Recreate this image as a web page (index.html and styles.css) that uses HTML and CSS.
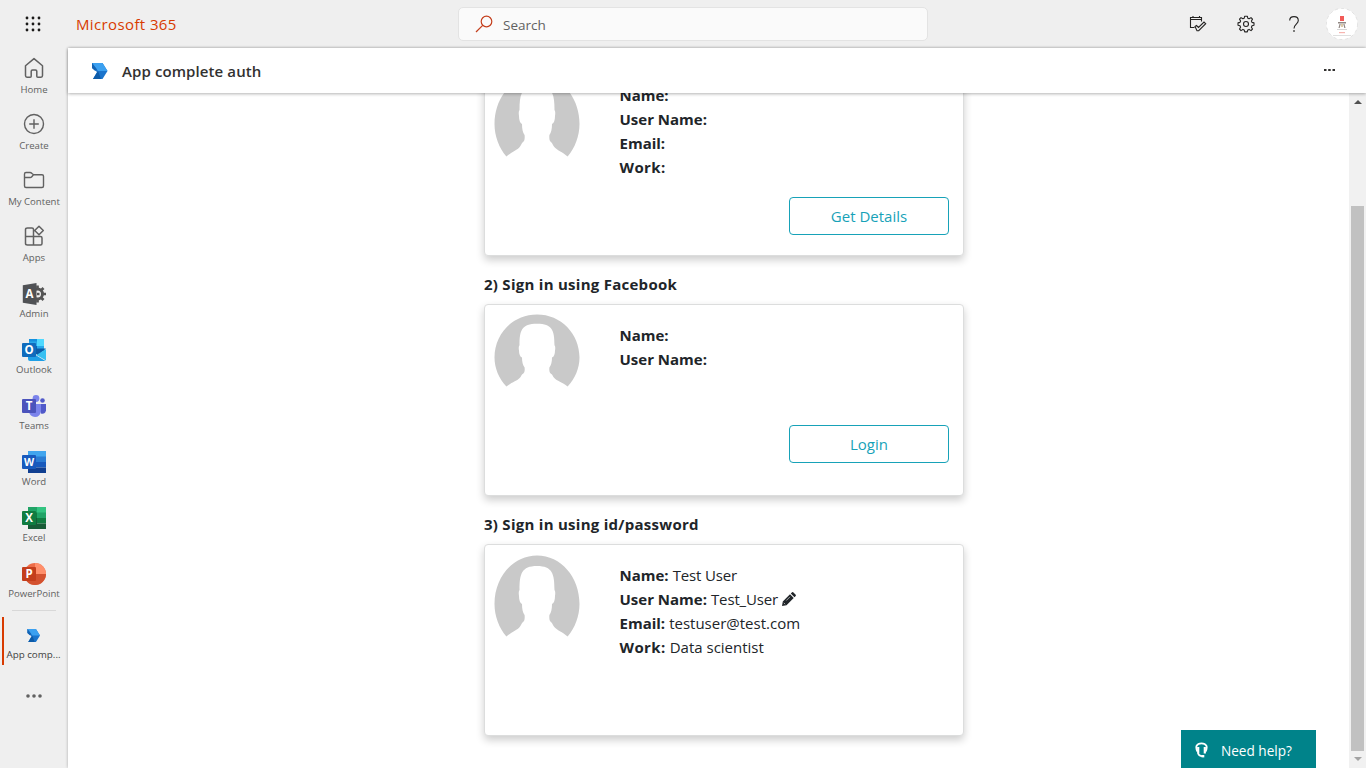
FILE: index.html
```html
<!DOCTYPE html>
<html lang="en">
<head>
<meta charset="utf-8">
<title>Microsoft 365</title>
<link rel="stylesheet" href="styles.css">
</head>
<body>
<svg class="defs" width="0" height="0">
  <symbol id="brand" viewBox="0 0 16 16">
    <path fill="#1b74cc" d="M.5 0H11l5 8-5 8H1.500L5.500 9 .5 5z"/>
    <path fill="#3ba0f0" d="M.5 0H11l5 8H6.500z"/>
    <path fill="#1263b4" d="M.5 0l5 6.500-2 1.300-3-2.800z"/>
    <path fill="#0d5ba8" d="M1.500 16l5-8 3 8z"/>
  </symbol>
  <symbol id="avatar" viewBox="0 0 86 82" preserveAspectRatio="none">
    <path fill="#c9c9c9" d="M12.400 81.500C5 73 .5 61 .5 49 .5 22 19 .5 43 .5S85.500 22 85.500 49c0 12-4.500 24-11.900 32.500-5-4.500-11-6.500-13.300-9.500-1.500-2-1.500-3-2.600-4.300-2-1.500-2.700-3-2.300-7.700 1.800-2.500 2.600-6 2.600-11 2-1 3-4 3-8 .5-3 .3-5-.5-6 0-16-2-24-17.500-24S25.500 19 25.500 35c-.8 1-1 3-.5 6 0 4 1 7 3 8 0 5 .8 8.500 2.600 11 .4 4.700-.3 6.200-2.300 7.700-1.100 1.300-1.100 2.300-2.600 4.300-2.300 3-8.300 5-13.300 9.500z"/>
  </symbol>
</svg>

<header class="topbar">
  <svg class="waffle" width="16" height="16" viewBox="0 0 16 16" fill="#1b1a19"><circle cx="2" cy="2" r="1.400"/><circle cx="8" cy="2" r="1.400"/><circle cx="14" cy="2" r="1.400"/><circle cx="2" cy="8" r="1.400"/><circle cx="8" cy="8" r="1.400"/><circle cx="14" cy="8" r="1.400"/><circle cx="2" cy="14" r="1.400"/><circle cx="8" cy="14" r="1.400"/><circle cx="14" cy="14" r="1.400"/></svg>
  <span class="product">Microsoft 365</span>
  <div class="search">
    <svg width="18" height="18" viewBox="0 0 18 18" fill="none" stroke="#c43e1c" stroke-width="1.200"><circle cx="11.500" cy="6.500" r="5.300"/><path d="M7.700 10.300L1 17"/></svg>
    <span class="search-text">Search</span>
  </div>
  <div class="tools">
    <svg width="18" height="18" viewBox="0 0 18 18" fill="none" stroke="#252423" stroke-width="1.100"><path d="M5.500 12.500h-4V2.500h11v4M1.500 4.500h11M4 1v2M10.500 1v2"/><path d="M6 11.500l1.500-1 2 2 5.500-5.500 1.700 1.700-7 7H8z"/></svg>
    <svg width="18" height="18" viewBox="0 0 18 18" fill="none" stroke="#252423" stroke-width="1.100" stroke-linejoin="round"><circle cx="9" cy="9" r="2.500"/><path d="M7.700 1.200h2.600l.5 2 1.300.6 1.900-1.200 1.500 1.500-1.100 1.900.6 1.400 2 .5v2.400l-2 .5-.6 1.400 1.100 1.800-1.500 1.600-1.900-1.200-1.300.6-.5 1.900H7.700l-.5-1.900-1.300-.6L4 15.600 2.500 14l1.100-1.800-.6-1.400-2-.5V7.900l2-.5.6-1.400-1.100-1.900L4 2.600l1.900 1.200 1.300-.6z"/></svg>
    <svg width="18" height="18" viewBox="0 0 18 18" fill="none" stroke="#252423" stroke-width="1.100"><path d="M4.700 5.500C4.700 3 6.300 1.600 9 1.600s4.300 1.500 4.300 3.900c0 3.600-4.300 3.800-4.300 8"/><path d="M9 15.200v1.600" stroke-width="1.500"/></svg>
  </div>
  <svg class="profile" width="32" height="32" viewBox="0 0 32 32"><circle cx="16" cy="16" r="15.600" fill="#fff" stroke="#d8d8d8" stroke-width=".7" stroke-dasharray="3 3"/><path fill="#f25b58" d="M14 8h4v5h-4z"/><path fill="#918783" d="M12 14h8v1.500h-8zM13.500 16h1.200l-1 4h-1.200zM17.300 16h1.200l1 4h-1.200z"/><path fill="#d9c9a8" d="M15 16h2v3h-2z"/><path fill="#d5d5d5" d="M11 21h10v1H11zM7 27h18v.8H7z"/><path fill="#f7b5b0" d="M13 24h6v1.200h-6z"/></svg>
</header>

<div class="shell">
  <nav class="rail">
    <a class="item"><svg width="24" height="24" viewBox="0 0 24 24" fill="none" stroke="#616161" stroke-width="1.500" stroke-linejoin="round"><path d="M3.500 9.800L12 2.600l8.500 7.200v9.700q0 1.700-1.500 1.700h-3.200q-1 0-1-1v-5q0-1.200-1.300-1.200h-3q-1.300 0-1.300 1.200v5q0 1-1 1H5q-1.500 0-1.500-1.700z"/></svg><span>Home</span></a>
    <a class="item"><svg width="24" height="24" viewBox="0 0 24 24" fill="none" stroke="#616161" stroke-width="1.400"><circle cx="12" cy="12" r="9.500"/><path d="M12 7.200v9.600M7.200 12h9.600"/></svg><span>Create</span></a>
    <a class="item"><svg width="24" height="24" viewBox="0 0 24 24" fill="none" stroke="#616161" stroke-width="1.400" stroke-linejoin="round"><path d="M2.500 6q0-1.500 1.500-1.500h4q1 0 2 1l1.500 1.300H20q1.500 0 1.500 1.500V18q0 1.500-1.500 1.500H4q-1.500 0-1.500-1.500zM2.500 9.500h5.600q1 0 1.700-.8l1.700-1.900"/></svg><span>My Content</span></a>
    <a class="item"><svg width="24" height="24" viewBox="0 0 24 24" fill="none" stroke="#616161" stroke-width="1.500" stroke-linejoin="round"><path d="M11.500 12V5.500q0-1.500-1.500-1.500H5.500Q3.500 4 3.500 5.500v14q0 1.500 2 1.500H18.500q1.500 0 1.500-1.500V14q0-1.500-1.500-1.500h-15M11.500 12v9M17 2.200l4.300 4.300-4.300 4.300-4.300-4.300z"/></svg><span>Apps</span></a>
    <a class="item app"><svg width="24" height="24" viewBox="0 0 24 24"><path d="M15.500 3.500v17M7 12h17M9.500 6l12 12M21.500 6l-12 12" stroke="#555" stroke-width="2.700"/><circle cx="15.500" cy="12" r="5" fill="none" stroke="#555" stroke-width="3"/><circle cx="15.500" cy="12" r="3.500" fill="#efefef"/><path d="M15 12h2.500" stroke="#555" stroke-width="2.400"/><path fill="#505255" d="M.8 3.200L14.500 1v22L.8 20.800z"/><text x="7.500" y="16.200" class="glyph">A</text></svg><span>Admin</span></a>
    <a class="item app"><svg width="24" height="24" viewBox="0 0 24 24"><path fill="#0a63b8" d="M7 1h15v12H7z"/><path fill="#1490df" d="M7 1h8v7H7z"/><path fill="#50d9ff" d="M15 1h7v7h-7z"/><path fill="#28a8ea" d="M7 3.500h8V8H7zM15 8h7v4h-7z"/><path fill="#0a5ca8" d="M7 10.500h17l-8 7z"/><path fill="#1f9fe6" d="M6 12.500L23.500 23H8q-2 0-2-2z"/><path fill="#36c0f2" d="M24 11v11.500l-9.500-5.500z"/><rect y="5" width="14" height="14" rx="1" fill="#0f6cbd"/><text x="7" y="16" class="glyph">O</text></svg><span>Outlook</span></a>
    <a class="item app"><svg width="24" height="24" viewBox="0 0 24 24"><circle cx="20.500" cy="6.500" r="2.300" fill="#5059c9"/><circle cx="14" cy="4.500" r="3.400" fill="#7b83eb"/><path fill="#5059c9" d="M16 10h8v6.500q-1 4-5 3z"/><path fill="#7b83eb" d="M8 10h11v7q-1 6-6 6-5-.5-6-5z"/><rect y="5" width="14" height="14" rx="1" fill="#4b53bc"/><text x="7" y="16" class="glyph">T</text></svg><span>Teams</span></a>
    <a class="item app"><svg width="24" height="24" viewBox="0 0 24 24"><path fill="#41a5ee" d="M6 1h18v6H6z"/><path fill="#2b7cd3" d="M6 6.500h18V12H6z"/><path fill="#185abd" d="M6 12h18v5.500H6z"/><path fill="#103f91" d="M6 17.500h18V23H6z"/><rect y="5" width="14" height="14" rx="1" fill="#185abd"/><text x="7" y="16" class="glyph glyph-w">W</text></svg><span>Word</span></a>
    <a class="item app"><svg width="24" height="24" viewBox="0 0 24 24"><path fill="#21a366" d="M6 1h9v6H6z"/><path fill="#33c481" d="M15 1h9v6h-9z"/><path fill="#107c41" d="M6 6.500h9V12H6zM15 12h9v5.500h-9z"/><path fill="#21a366" d="M15 6.500h9V12h-9z"/><path fill="#185c37" d="M6 12h9v5.500h9V23H6z"/><rect y="5" width="14" height="14" rx="1" fill="#107c41"/><text x="7" y="16" class="glyph">X</text></svg><span>Excel</span></a>
    <a class="item app"><svg width="24" height="24" viewBox="0 0 24 24"><circle cx="13" cy="12" r="11" fill="#ed6c47"/><path fill="#ff8f6b" d="M13 1a11 11 0 0 1 11 11H13z"/><path fill="#d35230" d="M2 12h22a11 11 0 0 1-22 0z"/><rect y="5" width="14" height="14" rx="1" fill="#c43e1c"/><text x="7" y="16" class="glyph">P</text></svg><span>PowerPoint</span></a>
    <hr class="divider">
    <a class="item current"><svg width="13" height="13"><use href="#brand"/></svg><span>App comp...</span></a>
    <svg class="more" width="16" height="4" viewBox="0 0 16 4" fill="#616161"><circle cx="2" cy="2" r="1.800"/><circle cx="8" cy="2" r="1.800"/><circle cx="14" cy="2" r="1.800"/></svg>
  </nav>

  <main class="main">
    <div class="apphead">
      <svg width="17" height="16"><use href="#brand"/></svg>
      <h1>App complete auth</h1>
      <svg class="dots" width="11" height="2" viewBox="0 0 11 2" fill="#323130"><path d="M0 0h2.500v2H0zM4.200 0h2.500v2H4.200zM8.500 0H11v2H8.500z"/></svg>
    </div>
    <div class="view">
      <div class="scroll">
        <section class="card first">
          <svg class="photo" width="86" height="82"><use href="#avatar"/></svg>
          <div class="info">
            <p><b>Name:</b></p>
            <p><b>User Name:</b></p>
            <p><b>Email:</b></p>
            <p><b class="work">Work:</b></p>
            <button class="btn">Get Details</button>
          </div>
        </section>
        <h2>2) Sign in using Facebook</h2>
        <section class="card second">
          <svg class="photo" width="86" height="73"><use href="#avatar"/></svg>
          <div class="info">
            <p><b>Name:</b></p>
            <p><b>User Name:</b></p>
            <button class="btn">Login</button>
          </div>
        </section>
        <h2>3) Sign in using id/password</h2>
        <section class="card">
          <svg class="photo" width="86" height="82"><use href="#avatar"/></svg>
          <div class="info">
            <p><b>Name:</b><span class="value">Test User</span></p>
            <p><b>User Name:</b><span class="value">Test_User</span><svg width="14" height="14" viewBox="0 0 14 14" fill="#212529"><path d="M0 14l.8-4.500L8 2.300 11.700 6l-7.200 7.200zM8.800 1.500L10.100.3q.6-.4 1.100 0l2.500 2.500q.4.600 0 1.100l-1.200 1.300z"/><path d="M1.800 10.800l1.400 1.400M4.300 8.500L8 4.800" stroke="#fff" stroke-width=".6"/></svg></p>
            <p><b>Email:</b><span>testuser@test.com</span></p>
            <p><b class="work">Work:</b><span>Data scientist</span></p>
          </div>
        </section>
      </div>
      <div class="scrollbar">
        <svg width="17" height="17" viewBox="0 0 17 17"><path fill="#505050" d="M5 11h8L9 7z"/></svg>
        <div class="thumb"></div>
        <svg width="17" height="17" viewBox="0 0 17 17"><path fill="#a3a3a3" d="M5 6h8l-4 4z"/></svg>
      </div>
    </div>
  </main>
</div>

<button class="help">
  <svg width="13" height="16" viewBox="0 0 13 16" fill="none" stroke="#fff"><path stroke-width="1.800" d="M2.500 9.500C0 5 1.500 1.300 6.500 1.300S13 5 10.500 9.500"/><path stroke-width="2.200" d="M3.200 5v6.500M9.800 5v6.500"/><path stroke-width="1.600" d="M3 11q.5 3 4.500 3.200"/><path stroke-width="2.400" d="M6.500 14.200h2.800"/></svg>
  <span>Need help?</span>
</button>
</body>
</html>
```

FILE: styles.css
```css
* { box-sizing: border-box; }
body { margin: 0; width: 1366px; height: 768px; overflow: hidden; background: #efefef; color: #212529; font-family: "Open Sans", "Noto Sans", sans-serif; font-size: 15px; }
svg { display: block; flex: none; }
.defs { position: absolute; }
h1, h2, p { margin: 0; }
button { font: inherit; margin: 0; padding: 0; }

.topbar { display: flex; align-items: center; height: 48px; }
.waffle { margin-left: 25px; }
.product { width: 417px; flex: none; padding-left: 35px; color: #d83b01; font-weight: 500; letter-spacing: .38px; white-space: nowrap; }
.search { display: flex; flex: none; align-items: center; gap: 10px; width: 470px; height: 34px; padding-left: 16px; background: #fafafa; border: 1px solid #e3e3e3; border-radius: 5px; color: #616161; font-size: 13.5px; }
.search-text { padding-top: 2px; }
.tools { display: flex; gap: 30px; margin-left: 261px; }
.profile { margin-left: 23px; }

.shell { display: flex; height: 720px; }
.rail { width: 68px; flex: none; }
.item { display: flex; flex-direction: column; align-items: center; height: 56px; padding-top: 8px; color: #616161; font-size: 9.600px; line-height: 14px; white-space: nowrap; }
.item span { margin-top: 3px; }
.item.app { padding-top: 10px; }
.app span { margin-top: 1px; }
.divider { width: 44px; margin: 2px auto 6px; border: 0; border-top: 1px solid #d8d8d8; }
.item.current { height: 48px; margin-left: 2px; padding: 12px 5px 0 0; border-left: 2px solid #d83b01; color: #424242; font-size: 9.800px; }
.current span { margin-top: 6px; }
.more { margin: 29px auto 0; }
.glyph { fill: #fff; font-size: 11.5px; font-weight: 700; text-anchor: middle; }
.glyph-w { font-size: 10.5px; }

.main { display: flex; flex-direction: column; flex: 1; background: #fff; box-shadow: 0 0 3px rgba(0,0,0,.28); clip-path: inset(-3px 0 0 -4px); }
.apphead { position: relative; z-index: 1; display: flex; align-items: center; height: 45px; flex: none; padding: 0 31px 0 23px; background: #fff; box-shadow: 0 1px 3px rgba(0,0,0,.3); }
.apphead h1 { margin-left: 14px; color: #323130; font-size: 15px; font-weight: 600; letter-spacing: .1px; }
.dots { margin-left: auto; margin-bottom: 2px; }

.view { display: flex; height: 675px; overflow: hidden; }
.scroll { flex: 1; padding-left: 416px; }
.card { display: flex; width: 480px; height: 192px; padding-left: 9px; border: 1px solid #dcdddd; border-radius: 4px; background: #fff; box-shadow: 0 4px 8px rgba(0,0,0,.2); }
.first { margin-top: -29px; }
.photo { margin-top: 10px; }
.second .photo { margin-top: 9px; }
.info { display: flex; flex-direction: column; flex: 1; margin-left: 39px; padding: 18px 14px 0 .5px; }
.info p { display: flex; align-items: center; gap: 4px; height: 24px; white-space: nowrap; }
.info b { font-weight: 700; }
.info .work { letter-spacing: .4px; }
.info .value { letter-spacing: -.15px; }
.btn { align-self: flex-end; width: 160px; height: 38px; margin-top: 18px; border: 1px solid #17a2b8; border-radius: 4px; background: #fff; color: #17a2b8; }
.second .btn { margin-top: 54px; }
h2 { padding: 16px 0 8px; font-size: 15px; line-height: 24px; font-weight: 700; letter-spacing: .27px; }
.scrollbar { display: flex; flex-direction: column; width: 17px; background: #f1f1f1; }
.thumb { width: 13px; height: 545px; margin: 96px auto 0; background: #c1c1c1; }

.help { position: absolute; left: 1181px; top: 730px; display: flex; align-items: center; gap: 13px; width: 135px; height: 38px; padding: 2px 0 0 14px; border: 0; background: #00838a; color: #fff; font-size: 13.6px; }
```
